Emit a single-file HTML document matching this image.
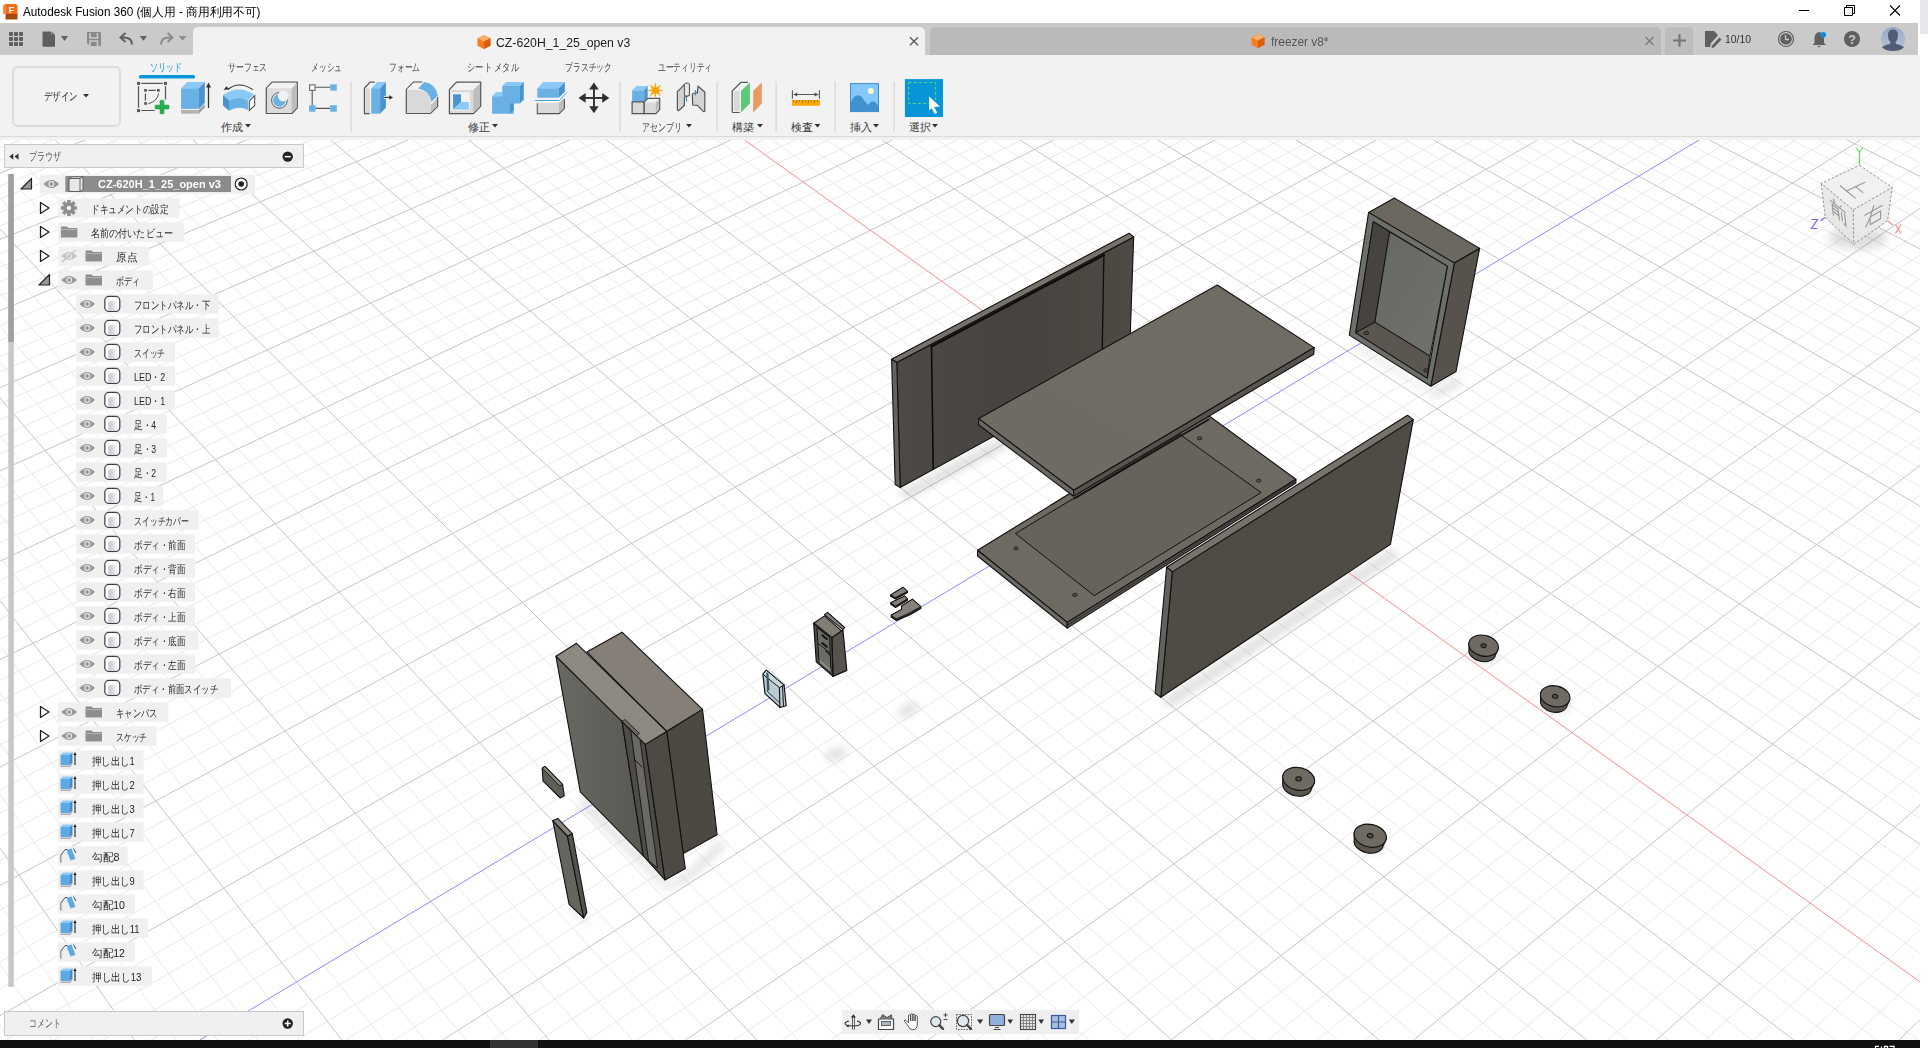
<!DOCTYPE html>
<html><head><meta charset="utf-8">
<style>
*{margin:0;padding:0;box-sizing:border-box}
html,body{width:1928px;height:1048px;overflow:hidden;background:#fff;font-family:"Liberation Sans",sans-serif;}
.abs{position:absolute}

.t{white-space:nowrap}

</style></head><body>
<div class="abs" style="left:0;top:0;width:1928px;height:1048px;">
<svg class="abs" style="left:0;top:0" width="1928" height="1048" viewBox="0 0 1928 1048">
<rect x="0" y="140" width="1920" height="900" fill="#ffffff"/>
<path d="M20.6 140.0L0.0 147.9M52.9 140.0L0.0 160.4M117.5 140.0L0.0 186.0M149.8 140.0L0.0 199.1M182.1 140.0L0.0 212.3M214.4 140.0L0.0 225.8M279.0 140.0L0.0 253.3M311.3 140.0L0.0 267.3M343.5 140.0L0.0 281.6M1902.0 140.0L1920.0 148.8M375.8 140.0L0.0 296.0M1874.4 140.0L1920.0 162.5M440.4 140.0L0.0 325.6M1819.3 140.0L1920.0 190.4M472.7 140.0L0.0 340.8M1791.8 140.0L1920.0 204.7M505.0 140.0L0.0 356.2M1764.2 140.0L1920.0 219.2M537.2 140.0L0.0 371.8M1736.7 140.0L1920.0 233.9M601.8 140.0L0.0 403.8M1681.6 140.0L1920.0 264.1M634.1 140.0L0.0 420.1M1654.0 140.0L1920.0 279.6M666.4 140.0L0.0 436.8M1626.4 140.0L1920.0 295.3M698.7 140.0L0.0 453.7M1598.9 140.0L1920.0 311.3M763.2 140.0L0.0 488.3M1543.8 140.0L1920.0 344.0M795.5 140.0L0.0 506.1M1516.2 140.0L1920.0 360.8M827.8 140.0L0.0 524.2M1488.7 140.0L1920.0 377.9M860.0 140.0L0.0 542.5M1461.1 140.0L1920.0 395.2M924.6 140.0L0.0 580.2M1406.0 140.0L1920.0 430.9M956.9 140.0L0.0 599.5M1378.4 140.0L1920.0 449.2M989.1 140.0L0.0 619.2M1350.9 140.0L1920.0 467.8M1021.4 140.0L0.0 639.2M1323.3 140.0L1920.0 486.8M1086.0 140.0L0.0 680.3M1268.2 140.0L1920.0 525.7M1118.2 140.0L0.0 701.4M1240.6 140.0L1920.0 545.7M1150.5 140.0L0.0 722.9M1213.1 140.0L1920.0 566.1M1182.8 140.0L0.0 744.8M1185.5 140.0L1920.0 586.9M1247.3 140.0L-0.0 789.9M1130.4 140.0L1920.0 629.6M1279.6 140.0L0.0 813.1M1102.8 140.0L1920.0 651.6M1311.9 140.0L0.0 836.7M1075.3 140.0L1920.0 674.1M1344.1 140.0L0.0 860.7M1047.7 140.0L1920.0 696.9M1408.7 140.0L-0.0 910.3M992.6 140.0L1920.0 744.0M1440.9 140.0L0.0 935.8M965.0 140.0L1920.0 768.3M1473.2 140.0L0.0 961.9M937.5 140.0L1920.0 793.1M1505.5 140.0L-0.0 988.5M909.9 140.0L1920.0 818.4M1570.0 140.0L5.7 1040.0M854.8 140.0L1920.0 870.6M1602.3 140.0L54.2 1040.0M827.2 140.0L1920.0 897.5M1634.5 140.0L102.8 1040.0M799.6 140.0L1920.0 925.0M1666.8 140.0L151.4 1040.0M772.1 140.0L1920.0 953.1M1731.3 140.0L248.5 1040.0M716.9 140.0L1920.0 1011.2M1763.6 140.0L297.0 1040.0M689.4 140.0L1918.3 1040.0M1795.8 140.0L345.6 1040.0M661.8 140.0L1876.8 1040.0M1828.1 140.0L394.1 1040.0M634.2 140.0L1835.3 1040.0M1892.6 140.0L491.3 1040.0M579.1 140.0L1752.4 1040.0M1920.0 143.2L539.8 1040.0M551.5 140.0L1710.9 1040.0M1920.0 164.4L588.4 1040.0M523.9 140.0L1669.4 1040.0M1920.0 186.2L636.9 1040.0M496.4 140.0L1627.9 1040.0M1920.0 231.3L734.0 1040.0M441.2 140.0L1545.0 1040.0M1920.0 254.7L782.6 1040.0M413.6 140.0L1503.5 1040.0M1920.0 278.7L831.1 1040.0M386.1 140.0L1462.0 1040.0M1920.0 303.3L879.7 1040.0M358.5 140.0L1420.6 1040.0M1920.0 354.5L976.8 1040.0M303.3 140.0L1337.6 1040.0M1920.0 381.1L1025.3 1040.0M275.8 140.0L1296.1 1040.0M1920.0 408.4L1073.9 1040.0M248.2 140.0L1254.6 1040.0M1920.0 436.5L1122.4 1040.0M220.6 140.0L1213.1 1040.0M1920.0 495.0L1219.5 1040.0M165.5 140.0L1130.2 1040.0M1920.0 525.6L1268.0 1040.0M137.9 140.0L1088.7 1040.0M1920.0 557.0L1316.6 1040.0M110.3 140.0L1047.2 1040.0M1920.0 589.3L1365.1 1040.0M82.7 140.0L1005.7 1040.0M1920.0 656.9L1462.2 1040.0M27.6 140.0L922.7 1040.0M1920.0 692.2L1510.7 1040.0M0.0 140.0L881.3 1040.0M1920.0 728.7L1559.3 1040.0M0.0 168.6L839.8 1040.0M1920.0 766.3L1607.8 1040.0M0.0 198.2L798.3 1040.0M1920.0 845.2L1704.9 1040.0M0.0 260.3L715.3 1040.0M1920.0 886.6L1753.4 1040.0M0.0 292.9L673.8 1040.0M1920.0 929.5L1801.9 1040.0M0.0 326.7L632.3 1040.0M1920.0 973.8L1850.4 1040.0M0.0 361.7L590.8 1040.0M0.0 435.5L507.8 1040.0M0.0 474.5L466.3 1040.0M0.0 515.0L424.9 1040.0M0.0 557.0L383.4 1040.0M0.0 646.2L300.4 1040.0M0.0 693.6L258.9 1040.0M0.0 743.0L217.4 1040.0M0.0 794.5L175.9 1040.0M0.0 904.5L92.9 1040.0M0.0 963.3L51.4 1040.0M0.0 1024.9L9.9 1040.0" stroke="#e9e9e9" stroke-width="1" fill="none"/>
<path d="M85.2 140.0L0.0 173.1M246.7 140.0L0.0 239.4M408.1 140.0L0.0 310.7M1846.9 140.0L1920.0 176.3M569.5 140.0L0.0 387.6M1709.1 140.0L1920.0 248.9M730.9 140.0L0.0 470.9M1571.3 140.0L1920.0 327.5M892.3 140.0L0.0 561.2M1433.6 140.0L1920.0 412.9M1053.7 140.0L-0.0 659.6M1295.8 140.0L1920.0 506.1M1215.1 140.0L0.0 767.2M1158.0 140.0L1920.0 608.1M1376.4 140.0L0.0 885.3M1020.1 140.0L1920.0 720.2M1537.7 140.0L0.0 1015.6M882.3 140.0L1920.0 844.2M1860.3 140.0L442.7 1040.0M606.6 140.0L1793.8 1040.0M1920.0 208.4L685.5 1040.0M468.8 140.0L1586.5 1040.0M1920.0 328.6L928.2 1040.0M330.9 140.0L1379.1 1040.0M1920.0 465.4L1170.9 1040.0M193.0 140.0L1171.7 1040.0M1920.0 622.6L1413.6 1040.0M55.2 140.0L964.2 1040.0M1920.0 805.1L1656.3 1040.0M0.0 228.7L756.8 1040.0M1920.0 1019.6L1899.0 1040.0M0.0 397.9L549.3 1040.0M0.0 600.7L341.9 1040.0M0.0 848.3L134.4 1040.0" stroke="#c6c6c6" stroke-width="1" fill="none"/>
<path d="M744.5 140.0L1920.0 981.8" stroke="#ff8c8c" stroke-width="1" fill="none"/>
<path d="M1699.0 140.0L199.9 1040.0" stroke="#8c8cff" stroke-width="1" fill="none"/>
<defs>
<filter id="blur6" x="-50%" y="-50%" width="200%" height="200%"><feGaussianBlur stdDeviation="6"/></filter>
<filter id="blur4" x="-50%" y="-50%" width="200%" height="200%"><feGaussianBlur stdDeviation="4"/></filter>
<filter id="blur3" x="-50%" y="-50%" width="200%" height="200%"><feGaussianBlur stdDeviation="3"/></filter>
<linearGradient id="gA" x1="0" y1="0" x2="1" y2="0"><stop offset="0" stop-color="#4d4a45"/><stop offset="0.5" stop-color="#47443f"/><stop offset="1" stop-color="#4d4a44"/></linearGradient>
<linearGradient id="gTop" x1="0" y1="1" x2="1" y2="0"><stop offset="0" stop-color="#6f6b63"/><stop offset="1" stop-color="#716c63"/></linearGradient>
<linearGradient id="gBack" x1="0" y1="0" x2="1" y2="1"><stop offset="0" stop-color="#666862"/><stop offset="1" stop-color="#70726c"/></linearGradient>
<linearGradient id="gF" x1="0" y1="0" x2="1" y2="0"><stop offset="0" stop-color="#6a6862"/><stop offset="1" stop-color="#5a5852"/></linearGradient>
</defs>
<g opacity="0.12" filter="url(#blur4)"><path d="M898.0 492.0 L1000.0 438.0 L1010.0 446.0 L906.0 500.0 Z" fill="#000"/><path d="M980.0 560.0 L1068.0 630.0 L1078.0 634.0 L990.0 566.0 Z" fill="#000"/><path d="M1162.0 700.0 L1392.0 548.0 L1400.0 556.0 L1170.0 708.0 Z" fill="#000"/><path d="M1352.0 340.0 L1432.0 392.0 L1458.0 376.0 L1462.0 384.0 L1436.0 398.0 L1356.0 348.0 Z" fill="#000"/><path d="M582.0 796.0 L645.0 860.0 L668.0 884.0 L688.0 872.0 L720.0 840.0 L726.0 846.0 L690.0 880.0 L666.0 890.0 L580.0 806.0 Z" fill="#000"/><path d="M572.0 905.0 L588.0 920.0 L590.0 926.0 L572.0 912.0 Z" fill="#000"/></g>
<g opacity="0.12" filter="url(#blur4)"><ellipse cx="908" cy="710" rx="12" ry="6" transform="rotate(-28 908 710)" fill="#000"/><ellipse cx="836" cy="754" rx="12" ry="6" transform="rotate(-20 836 754)" fill="#000"/><ellipse cx="1486" cy="656" rx="13" ry="7" fill="#000"/><ellipse cx="1558" cy="706" rx="13" ry="7" fill="#000"/><ellipse cx="1301" cy="788" rx="13" ry="7" fill="#000"/><ellipse cx="1373" cy="846" rx="13" ry="7" fill="#000"/></g>
<path d="M896.8 362.5 L1133.7 237.0 L1129.3 362.0 L900.2 487.6 Z" fill="url(#gA)" stroke="#111" stroke-width="1.1" stroke-linejoin="round"/>
<path d="M891.6 359.3 L1129.1 233.2 L1133.7 237.0 L896.8 362.5 Z" fill="#77726a" stroke="#111" stroke-width="1.1" stroke-linejoin="round"/>
<path d="M891.6 359.3 L896.8 362.5 L900.2 487.6 L895.2 484.5 Z" fill="#63645f" stroke="#111" stroke-width="1.1" stroke-linejoin="round"/>
<path d="M931.5 345.8 L933.2 469.0" fill="none" stroke="#0c0c0c" stroke-width="1.6" stroke-linecap="round"/>
<path d="M1103.9 254.2 L1102.2 352.0" fill="none" stroke="#0c0c0c" stroke-width="1.3" stroke-linecap="round"/>
<path d="M931.5 346.5 L1103.9 255.0" fill="none" stroke="#0c0c0c" stroke-width="2.2" stroke-linecap="round"/>
<path d="M977.6 550.2 L1203.0 411.5 L1295.9 479.2 L1067.2 622.4 Z" fill="#6e6a62" stroke="#111" stroke-width="1.1" stroke-linejoin="round"/>
<path d="M977.6 550.2 L1067.2 622.4 L1067.2 628.1 L977.6 556.0 Z" fill="#6a6b66" stroke="#111" stroke-width="1.1" stroke-linejoin="round"/>
<path d="M1067.2 622.4 L1295.9 479.2 L1295.9 483.0 L1067.2 628.1 Z" fill="#57534c" stroke="#111" stroke-width="1.1" stroke-linejoin="round"/>
<path d="M1015.4 533.5 L1180.0 434.4 L1261.1 492.6 L1094.2 595.6 Z" fill="#67635b" stroke="#111" stroke-width="1.0" stroke-linejoin="round"/>
<path d="M1067.2 625.2 L1295.9 481.0" fill="none" stroke="#222" stroke-width="0.8" stroke-linecap="round"/>
<ellipse cx="1016" cy="548.3" rx="2.2" ry="1.5" fill="#5a564f" stroke="#111" stroke-width="0.8"/>
<ellipse cx="1074.8" cy="594.9" rx="2.2" ry="1.5" fill="#5a564f" stroke="#111" stroke-width="0.8"/>
<ellipse cx="1199.6" cy="438.2" rx="2.2" ry="1.5" fill="#5a564f" stroke="#111" stroke-width="0.8"/>
<ellipse cx="1258.7" cy="480.6" rx="2.2" ry="1.5" fill="#5a564f" stroke="#111" stroke-width="0.8"/>
<path d="M978.7 418.6 L1217.3 285.0 L1314.2 347.6 L1073.7 490.2 Z" fill="url(#gTop)" stroke="#111" stroke-width="1.1" stroke-linejoin="round"/>
<path d="M978.7 418.6 L1073.7 490.2 L1073.5 496.3 L978.5 424.8 Z" fill="#676862" stroke="#111" stroke-width="1.1" stroke-linejoin="round"/>
<path d="M1073.7 490.2 L1314.2 347.6 L1313.8 354.2 L1073.5 496.3 Z" fill="#58544d" stroke="#111" stroke-width="1.1" stroke-linejoin="round"/>
<path d="M1074.4 498.5 L1208.6 419.5" fill="none" stroke="#111" stroke-width="1.6" stroke-linecap="round"/>
<path d="M1172.3 571.9 L1413.3 419.6 L1390.4 544.4 L1160.8 697.3 Z" fill="#4f4b45" stroke="#111" stroke-width="1.1" stroke-linejoin="round"/>
<path d="M1166.6 567.2 L1407.5 415.2 L1413.3 419.6 L1172.3 571.9 Z" fill="#77726a" stroke="#111" stroke-width="1.1" stroke-linejoin="round"/>
<path d="M1166.6 567.2 L1172.3 571.9 L1160.8 697.3 L1155.1 693.3 Z" fill="#62635e" stroke="#111" stroke-width="1.1" stroke-linejoin="round"/>
<path d="M1368.6 212.4 L1394.4 198.1 L1479.6 248.4 L1454.4 263.1 Z" fill="#6c675f" stroke="#111" stroke-width="1.1" stroke-linejoin="round"/>
<path d="M1454.4 263.1 L1479.6 248.4 L1456.0 371.6 L1430.8 386.2 Z" fill="#57534c" stroke="#111" stroke-width="1.1" stroke-linejoin="round"/>
<path d="M1368.6 212.4 L1454.4 263.1 L1430.8 386.2 L1349.3 335.1 Z M1373.4 221.7 L1355.8 332.7 L1427.2 378.1 L1447.4 266.3 Z" fill="#6d6f6a" fill-rule="evenodd" stroke="#111" stroke-width="1.1" stroke-linejoin="round"/>
<path d="M1373.4 221.7 L1389.6 232.0 L1374.9 322.2 L1355.8 332.7 Z" fill="#47443f" stroke="#111" stroke-width="1.0" stroke-linejoin="round"/>
<path d="M1389.6 232.0 L1447.4 266.3 L1430.0 356.2 L1374.9 322.2 Z" fill="url(#gBack)" stroke="#111" stroke-width="1.0" stroke-linejoin="round"/>
<path d="M1374.9 322.2 L1430.0 356.2 L1427.2 378.1 L1355.8 332.7 Z" fill="#5b5750" stroke="#111" stroke-width="1.0" stroke-linejoin="round"/>
<ellipse cx="1366.4" cy="333.1" rx="2.2" ry="1.6" fill="#4f4b45" stroke="#111" stroke-width="0.8"/>
<ellipse cx="1426" cy="370.4" rx="2.2" ry="1.6" fill="#4f4b45" stroke="#111" stroke-width="0.8"/>
<path d="M586.8 651.9 L622.0 632.2 L702.5 709.4 L666.7 731.5 Z" fill="#867f77" stroke="#111" stroke-width="1.1" stroke-linejoin="round"/>
<path d="M666.7 731.5 L702.5 709.4 L717.1 834.7 L683.3 853.6 Z" fill="#4c4842" stroke="#111" stroke-width="1.1" stroke-linejoin="round"/>
<path d="M555.9 656.2 L622.0 721.2 L643.3 855.9 L580.3 791.8 Z" fill="url(#gF)" stroke="#111" stroke-width="1.1" stroke-linejoin="round"/>
<path d="M622.0 721.2 L645.2 744.4 L665.0 879.9 L643.3 855.9 Z" fill="#4f4c47" stroke="#111" stroke-width="1.1" stroke-linejoin="round"/>
<path d="M630.5 728.5 L639.5 735.5 L657.5 868.0 L648.5 860.5 Z" fill="#6a6a65" stroke="#111" stroke-width="0.9" stroke-linejoin="round"/>
<path d="M634.0 759.0 L642.0 767.0" fill="none" stroke="#111" stroke-width="0.9" stroke-linecap="round"/>
<path d="M645.2 744.4 L666.7 731.5 L685.3 868.5 L665.0 879.9 Z" fill="#4d4943" stroke="#111" stroke-width="1.1" stroke-linejoin="round"/>
<path d="M555.9 656.2 L576.5 643.3 L666.7 731.5 L645.2 744.4 Z" fill="#8e8980" stroke="#111" stroke-width="1.1" stroke-linejoin="round"/>
<path d="M622.0 721.2 L625.0 719.5 L639.5 733.5 L636.5 735.5 Z" fill="#6a6a65" stroke="#111" stroke-width="0.8" stroke-linejoin="round"/>
<path d="M542.2 768.1 L544.9 766.5 L562.6 784.4 L564.2 795.7 L560.3 798.0 L543.1 781.1 Z" fill="#5f5d57" stroke="#111" stroke-width="1.1" stroke-linejoin="round"/>
<path d="M542.2 768.1 L544.9 766.5 L562.6 784.4 L559.6 786.0 Z" fill="#8a857c" stroke="#111" stroke-width="0.9" stroke-linejoin="round"/>
<path d="M552.8 820.7 L567.4 836.0 L583.7 918.0 L569.1 904.4 Z" fill="#66645e" stroke="#111" stroke-width="1.1" stroke-linejoin="round"/>
<path d="M567.4 836.0 L572.3 833.7 L586.9 912.5 L583.7 918.0 Z" fill="#55524c" stroke="#111" stroke-width="1.1" stroke-linejoin="round"/>
<path d="M552.8 820.7 L557.7 818.4 L572.3 833.7 L567.4 836.0 Z" fill="#8a857c" stroke="#111" stroke-width="1.1" stroke-linejoin="round"/>
<path d="M762.9 674.2 L766.3 670.2 L784.1 685.2 L786.2 705.7 L780.2 707.5 L765.0 693.6 Z" fill="#bccbd2" stroke="#0f1418" stroke-width="1.2" stroke-linejoin="round"/>
<path d="M762.9 674.2 L766.3 670.2 L784.1 685.2 L779.4 687.6 Z" fill="#c9d6dc" stroke="#0f1418" stroke-width="1.0" stroke-linejoin="round"/>
<path d="M766.3 672.0 L768.5 673.5 L769.5 690.0 L767.0 691.5 Z" fill="#2f5a66"/>
<path d="M767.5 691.5 L779.6 702.8" fill="none" stroke="#1a2a30" stroke-width="0.9" stroke-linecap="round"/>
<path d="M779.4 687.6 L779.9 707.5" fill="none" stroke="#0f1418" stroke-width="1.1" stroke-linecap="round"/>
<path d="M784.1 685.2 L782.5 686.2 L783.5 706.3" fill="none" stroke="#0f1418" stroke-width="1.0" stroke-linecap="round"/>
<path d="M824.5 614.6 L827.5 612.4 L844.6 627.5 L842.9 629.6 Z" fill="#8a857c" stroke="#111" stroke-width="1.1" stroke-linejoin="round"/>
<path d="M813.7 623.2 L824.5 615.9 L842.1 631.3 L831.8 637.8 Z" fill="#827d74" stroke="#111" stroke-width="1.1" stroke-linejoin="round"/>
<path d="M831.8 637.8 L842.9 630.0 L846.8 670.4 L833.0 676.4 Z" fill="#57534c" stroke="#111" stroke-width="1.2" stroke-linejoin="round"/>
<path d="M813.7 623.2 L831.8 637.8 L833.0 676.4 L816.3 661.8 Z" fill="#4f4c47" stroke="#111" stroke-width="1.2" stroke-linejoin="round"/>
<path d="M817.0 627.5 L829.5 637.5 L831.0 672.5 L819.0 662.0 Z" fill="#6b6b67" stroke="#111" stroke-width="0.9" stroke-linejoin="round"/>
<path d="M822.3 635.2 L826.8 639.0" fill="none" stroke="#111" stroke-width="2.0" stroke-linecap="round"/>
<path d="M822.3 643.0 L826.8 646.8" fill="none" stroke="#111" stroke-width="2.0" stroke-linecap="round"/>
<path d="M818.2 643.5 L829.8 652.5" fill="none" stroke="#111" stroke-width="0.9" stroke-linecap="round"/>
<path d="M819.5 659.5 L830.5 668.5 L830.8 672.3 L819.8 663.0 Z" fill="#8d887f"/>
<path d="M826.0 651.0 L830.0 655.0" fill="none" stroke="#222" stroke-width="1.6" stroke-linecap="round"/>
<path d="M890.7 595.0 L903.0 587.3 L907.5 591.4 L907.5 592.5 L895.5 598.9 L890.7 596.3 Z" fill="#3d3a35" stroke="#111" stroke-width="1.2" stroke-linejoin="round"/>
<path d="M890.7 595.0 L903.0 587.3 L907.5 591.4 L895.5 597.5 Z" fill="#85807a" stroke="#111" stroke-width="0.9" stroke-linejoin="round"/>
<path d="M890.7 602.8 L904.7 596.1 L907.5 598.9 L907.5 600.2 L895.5 607.5 L890.7 604.1 Z" fill="#3d3a35" stroke="#111" stroke-width="1.2" stroke-linejoin="round"/>
<path d="M890.7 602.8 L904.7 596.1 L907.5 598.9 L895.5 606.0 Z" fill="#85807a" stroke="#111" stroke-width="0.9" stroke-linejoin="round"/>
<path d="M891.2 615.2 L901.5 609.6 L901.9 605.8 L912.4 599.3 L920.8 606.6 L920.8 608.4 L910.1 614.8 L896.3 620.4 L891.2 617.0 Z" fill="#3d3a35" stroke="#111" stroke-width="1.2" stroke-linejoin="round"/>
<path d="M891.2 615.2 L901.5 609.6 L901.9 605.8 L912.4 599.3 L920.8 606.6 L909.5 613.0 L896.3 619.0 Z" fill="#85807a" stroke="#111" stroke-width="0.9" stroke-linejoin="round"/>
<g transform="translate(1483.6 645.7) rotate(12) scale(1.0)">
<path d="M-14.9 0 L-13.6 6.5 A13.6 9.5 0 0 0 13.6 6.5 L14.9 0 Z" fill="#5a564f" stroke="#111" stroke-width="1.05" stroke-linejoin="round"/>
<ellipse cx="0" cy="0" rx="15" ry="10.4" fill="#6f6a62" stroke="#111" stroke-width="1.05"/>
<ellipse cx="0" cy="0" rx="2.6" ry="1.9" fill="#55514a" stroke="#111" stroke-width="1.05"/>
</g>
<g transform="translate(1555.2 696.3) rotate(12) scale(1.0)">
<path d="M-14.9 0 L-13.6 6.5 A13.6 9.5 0 0 0 13.6 6.5 L14.9 0 Z" fill="#5a564f" stroke="#111" stroke-width="1.05" stroke-linejoin="round"/>
<ellipse cx="0" cy="0" rx="15" ry="10.4" fill="#6f6a62" stroke="#111" stroke-width="1.05"/>
<ellipse cx="0" cy="0" rx="2.6" ry="1.9" fill="#55514a" stroke="#111" stroke-width="1.05"/>
</g>
<g transform="translate(1298.6 778.9) rotate(12) scale(1.08)">
<path d="M-14.9 0 L-13.6 6.5 A13.6 9.5 0 0 0 13.6 6.5 L14.9 0 Z" fill="#5a564f" stroke="#111" stroke-width="1.05" stroke-linejoin="round"/>
<ellipse cx="0" cy="0" rx="15" ry="10.4" fill="#6f6a62" stroke="#111" stroke-width="1.05"/>
<ellipse cx="0" cy="0" rx="2.6" ry="1.9" fill="#55514a" stroke="#111" stroke-width="1.05"/>
</g>
<g transform="translate(1370.2 835.7) rotate(12) scale(1.09)">
<path d="M-14.9 0 L-13.6 6.5 A13.6 9.5 0 0 0 13.6 6.5 L14.9 0 Z" fill="#5a564f" stroke="#111" stroke-width="1.05" stroke-linejoin="round"/>
<ellipse cx="0" cy="0" rx="15" ry="10.4" fill="#6f6a62" stroke="#111" stroke-width="1.05"/>
<ellipse cx="0" cy="0" rx="2.6" ry="1.9" fill="#55514a" stroke="#111" stroke-width="1.05"/>
</g>
</svg>
<div class="abs" style="left:0;top:0;width:1920px;height:23px;background:#fff"></div>
<svg class="abs" style="left:2px;top:2px" width="18" height="18" viewBox="0 0 18 18">
<path d="M1.5 4.5 Q1.5 2 4 2 L13 2 Q15.5 2 15.5 4.5 L15.5 12 L1.5 12 Z" fill="#f56a12"/>
<path d="M1 3.5 L4 1.5 L4 12 L1 12 Z" fill="#f88b3a"/>
<path d="M3.5 12 L15.5 12 L15.5 17 Q15.5 17.5 15 17.5 L4 17.5 Q3.5 17.5 3.5 17 Z" fill="#a84712"/>
<text x="9.5" y="10.5" font-family="Liberation Sans" font-weight="bold" font-size="9" fill="#fff" text-anchor="middle">F</text>
</svg>
<div class="abs t fit" style="--w:237.4;left:23px;top:5.8px;font-size:12px;line-height:12px;color:#000;font-weight:normal;">Autodesk Fusion 360 (個人用 - 商用利用不可)</div>
<svg class="abs" style="left:1790px;top:0" width="130" height="22" viewBox="0 0 130 22">
<path d="M9 10.5 H19" stroke="#000" stroke-width="1"/>
<path d="M54.5 7.5 H62.5 V15.5 H54.5 Z M56.5 7.5 V5.5 H64.5 V13.5 H62.5" stroke="#000" stroke-width="1" fill="none"/>
<path d="M100 5.5 L110 15.5 M110 5.5 L100 15.5" stroke="#000" stroke-width="1.1"/>
</svg>
<div class="abs" style="left:1920px;top:0;width:8px;height:34px;background:#e6e8ec"></div>
<div class="abs" style="left:1920px;top:76px;width:8px;height:1px;background:#d0d0d0"></div>
<div class="abs" style="left:0;top:23px;width:1918px;height:32px;background:#cacaca"></div>
<div class="abs" style="left:193px;top:27px;width:732px;height:28px;background:#f2f2f2;border-radius:5px 5px 0 0"></div>
<div class="abs" style="left:930px;top:27px;width:731px;height:28px;background:#bababa;border-radius:5px 5px 0 0"></div>
<div class="abs" style="left:1665px;top:27px;width:28px;height:28px;background:#bdbdbd;border-radius:4px 4px 0 0"></div>
<svg class="abs" style="left:0;top:23px" width="193" height="32" viewBox="0 23 193 32">
<g fill="#5f5f5f">
<rect x="9" y="32" width="4" height="4" rx="0.8"/><rect x="14" y="32" width="4" height="4" rx="0.8"/><rect x="19" y="32" width="4" height="4" rx="0.8"/>
<rect x="9" y="37" width="4" height="4" rx="0.8"/><rect x="14" y="37" width="4" height="4" rx="0.8"/><rect x="19" y="37" width="4" height="4" rx="0.8"/>
<rect x="9" y="42" width="4" height="4" rx="0.8"/><rect x="14" y="42" width="4" height="4" rx="0.8"/><rect x="19" y="42" width="4" height="4" rx="0.8"/>
<path d="M42.5 31.5 H51 V35 H55 V46 Q55 46.8 54.2 46.8 H43.3 Q42.5 46.8 42.5 46 Z"/>
<path d="M51.5 31.5 L55 35 H51.5 Z"/>
<path d="M61 36 H68 L64.5 41 Z"/>
<path d="M139.8 36 H147 L143.4 40.8 Z"/>
</g>
<path d="M87.5 32 H100 Q101 32 101 33 V45 Q101 46 100 46 H90 L87 43 V33 Q87 32 88 32 Z" fill="#8a8a8a"/>
<path d="M90 33 V38 H97.5 V33 M90 46 V41 H97.5 V46" stroke="#cacaca" stroke-width="1.6" fill="none"/>
<path d="M132 44.5 Q132 37.5 124 37.5 H121.5" stroke="#5f5f5f" stroke-width="2" fill="none"/>
<path d="M125.5 33 L120.5 37.5 L125.5 42" stroke="#5f5f5f" stroke-width="2" fill="none"/>
<path d="M161 44.5 Q161 37.5 169 37.5 H171.5" stroke="#8c8c8c" stroke-width="2" fill="none"/>
<path d="M167.5 33 L172.5 37.5 L167.5 42" stroke="#8c8c8c" stroke-width="2" fill="none"/>
<path d="M178.8 36 H186.3 L182.5 40.8 Z" fill="#8c8c8c"/>
</svg>
<svg class="abs" style="left:476px;top:34px" width="16" height="16" viewBox="0 0 16 16">
<path d="M8 1 L14.5 4.2 L14.5 11.8 L8 15 L1.5 11.8 L1.5 4.2 Z" fill="#f57d1f"/>
<path d="M8 1 L14.5 4.2 L8 7.5 L1.5 4.2 Z" fill="#fcae6a"/>
<path d="M8 7.5 L14.5 4.2 L14.5 11.8 L8 15 Z" fill="#d9600e"/>
</svg>
<div class="abs t fit" style="--w:134.3;left:496px;top:35.5px;font-size:13px;line-height:13px;color:#1e1e1e;font-weight:normal;">CZ-620H_1_25_open v3</div>
<svg class="abs" style="left:908px;top:35px" width="12" height="12" viewBox="0 0 12 12"><path d="M2 2.3 L10 10.3 M10 2.3 L2 10.3" stroke="#555" stroke-width="1.3"/></svg>
<svg class="abs" style="left:1250px;top:33px" width="16" height="16" viewBox="0 0 16 16">
<path d="M8 1 L14.5 4.2 L14.5 11.8 L8 15 L1.5 11.8 L1.5 4.2 Z" fill="#f57d1f"/>
<path d="M8 1 L14.5 4.2 L8 7.5 L1.5 4.2 Z" fill="#fcae6a"/>
<path d="M8 7.5 L14.5 4.2 L14.5 11.8 L8 15 Z" fill="#d9600e"/>
</svg>
<div class="abs t fit" style="--w:57.5;left:1270.5px;top:35.8px;font-size:12px;line-height:12px;color:#555;font-weight:normal;">freezer v8*</div>
<svg class="abs" style="left:1644px;top:35px" width="12" height="12" viewBox="0 0 12 12"><path d="M1.5 2 L9.5 10 M9.5 2 L1.5 10" stroke="#777" stroke-width="1.2"/></svg>
<svg class="abs" style="left:1665px;top:27px" width="255" height="28" viewBox="1665 27 255 28">
<path d="M1679.5 34.3 V46.7 M1673 40.5 H1686" stroke="#777" stroke-width="2.2"/>
<path d="M1705 31 H1714 L1717.5 34.5 V36 L1711 43 L1710 47 H1705 Z" fill="#5f5f5f"/>
<path d="M1712 45.5 L1719.5 37.5 L1721.5 39.5 L1714 47.5 L1711.5 48 Z" fill="#5f5f5f"/>
<circle cx="1786" cy="39" r="7.5" fill="none" stroke="#5f5f5f" stroke-width="1.2"/>
<circle cx="1786" cy="39" r="5.8" fill="#5f5f5f"/>
<path d="M1785.5 35 V39.5 H1789" stroke="#cacaca" stroke-width="1.3" fill="none"/>
<path d="M1819 32 Q1814.5 33 1814.5 38.5 V43 L1812.5 45 H1826 L1824 43 V38.5 Q1824 33 1819 32 Z" fill="#5f5f5f"/>
<path d="M1817 46 H1821 L1819 47.5 Z" fill="#5f5f5f"/>
<circle cx="1823.3" cy="34.8" r="2.8" fill="#0e8ee0"/>
<circle cx="1852" cy="39" r="8" fill="#5f5f5f"/>
<text x="1852" y="43.5" font-family="Liberation Sans" font-weight="bold" font-size="12.5" fill="#cacaca" text-anchor="middle">?</text>
<defs><linearGradient id="av" x1="0" y1="0" x2="0" y2="1"><stop offset="0" stop-color="#95a8c4"/><stop offset="1" stop-color="#b9c6d8"/></linearGradient></defs>
<circle cx="1893" cy="39" r="12" fill="url(#av)"/>
<path d="M1893 29.5 Q1898 29.5 1898 35 Q1898 40 1895.5 42 L1896 44 Q1902 45 1904 47.5 Q1900 51 1893 51 Q1886 51 1882 47.5 Q1884 45 1890 44 L1890.5 42 Q1888 40 1888 35 Q1888 29.5 1893 29.5 Z" fill="#4f5e75"/>
</svg>
<div class="abs t fit" style="--w:26;left:1725px;top:34.2px;font-size:11px;line-height:11px;color:#333;font-weight:normal;">10/10</div>
<div class="abs" style="left:0;top:55px;width:1920px;height:82px;background:#f2f2f2;border-bottom:1px solid #dadada"></div>
<div class="abs" style="left:0;top:137px;width:1920px;height:3px;background:#f2f2f2"></div>
<div class="abs" style="left:0;top:1040px;width:1920px;height:8px;background:#111"></div>
<div class="abs" style="left:12px;top:65.5px;width:109px;height:61px;border:2px solid #dcdcdc;border-radius:6px"></div>
<div class="abs t fit" style="--w:33.7;left:44px;top:91.2px;font-size:11px;line-height:11px;color:#222;font-weight:normal;">デザイン</div>
<div class="abs t fit" style="--w:32.3;left:150px;top:62.2px;font-size:11px;line-height:11px;color:#0696d7;font-weight:normal;">ソリッド</div>
<div class="abs t fit" style="--w:39.3;left:228px;top:62.2px;font-size:11px;line-height:11px;color:#444;font-weight:normal;">サーフェス</div>
<div class="abs t fit" style="--w:31;left:311px;top:62.2px;font-size:11px;line-height:11px;color:#444;font-weight:normal;">メッシュ</div>
<div class="abs t fit" style="--w:31;left:389px;top:62.2px;font-size:11px;line-height:11px;color:#444;font-weight:normal;">フォーム</div>
<div class="abs t fit" style="--w:52;left:467px;top:62.2px;font-size:11px;line-height:11px;color:#444;font-weight:normal;">シート メタル</div>
<div class="abs t fit" style="--w:47;left:565px;top:62.2px;font-size:11px;line-height:11px;color:#444;font-weight:normal;">プラスチック</div>
<div class="abs t fit" style="--w:54;left:658px;top:62.2px;font-size:11px;line-height:11px;color:#444;font-weight:normal;">ユーティリティ</div>
<div class="abs t fit" style="--w:22;left:221px;top:121.7px;font-size:11px;line-height:11px;color:#3a3a3a;font-weight:normal;">作成</div>
<div class="abs t fit" style="--w:22;left:468px;top:121.7px;font-size:11px;line-height:11px;color:#3a3a3a;font-weight:normal;">修正</div>
<div class="abs t fit" style="--w:40;left:642px;top:121.7px;font-size:11px;line-height:11px;color:#3a3a3a;font-weight:normal;">アセンブリ</div>
<div class="abs t fit" style="--w:22;left:732px;top:121.7px;font-size:11px;line-height:11px;color:#3a3a3a;font-weight:normal;">構築</div>
<div class="abs t fit" style="--w:22;left:790.5px;top:121.7px;font-size:11px;line-height:11px;color:#3a3a3a;font-weight:normal;">検査</div>
<div class="abs t fit" style="--w:22;left:850px;top:121.7px;font-size:11px;line-height:11px;color:#3a3a3a;font-weight:normal;">挿入</div>
<div class="abs t fit" style="--w:22;left:909px;top:121.7px;font-size:11px;line-height:11px;color:#3a3a3a;font-weight:normal;">選択</div>
<svg class="abs" style="left:0;top:55px" width="960" height="85" viewBox="0 55 960 85">
<rect x="139" y="75" width="56" height="3.5" rx="1.5" fill="#0696d7"/>
<path d="M83 94 H89 L86 97.5 Z" fill="#333"/>
<g fill="#333">
<path d="M245 124 H251 L248 127.5 Z"/><path d="M492 124 H498 L495 127.5 Z"/><path d="M686 124 H692 L689 127.5 Z"/>
<path d="M757 124 H763 L760 127.5 Z"/><path d="M814.5 124 H820.5 L817.5 127.5 Z"/><path d="M873 124 H879 L876 127.5 Z"/><path d="M932 124 H938 L935 127.5 Z"/>
</g>
<g fill="#d6d6d6"><rect x="350.5" y="81.5" width="1.2" height="50.5"/><rect x="619.5" y="81.5" width="1.2" height="50.5"/><rect x="716.5" y="81.5" width="1.2" height="50.5"/><rect x="775.5" y="81.5" width="1.2" height="50.5"/><rect x="834.5" y="81.5" width="1.2" height="50.5"/><rect x="893.5" y="81.5" width="1.2" height="50.5"/></g>
<!-- sketch -->
<g fill="#555">
<rect x="137.1" y="81.9" width="3" height="3"/><rect x="164" y="81.9" width="3" height="3"/><rect x="137.1" y="109.1" width="3" height="3"/>
<rect x="144.2" y="89" width="2.7" height="2.7"/><rect x="157" y="89" width="2.7" height="2.7"/><rect x="144.2" y="102.1" width="2.7" height="2.7"/>
</g>
<g stroke="#555" stroke-width="1.2" fill="none">
<path d="M141.3 83.4 H162.8 M138.5 86.1 V107.7 M165.5 86.1 V99.6 M141.3 110.5 H154.7"/>
<path d="M148.3 90.4 H155.8 M145.4 93.4 V100.6"/>
<path d="M158.7 93.4 Q157 101.5 148.3 103.7" stroke-width="1"/>
</g>
<path d="M160.1 100.4 H163.9 V105.2 H168.9 V108.9 H163.9 V113.7 H160.1 V108.9 H155.2 V105.2 H160.1 Z" fill="#23b04e" stroke="#17933c" stroke-width="0.6"/>
<!-- extrude -->
<path d="M181.1 88.2 H198.9 V108.9 H181.1 Z" fill="#69b0e4"/>
<path d="M181.1 88.2 L187.3 82 H204.8 L198.9 88.2 Z" fill="#8bcaf8"/>
<path d="M198.9 88.2 L204.8 82 V102.7 L198.9 108.9 Z" fill="#4a93cf"/>
<path d="M181.1 110 H198.9 V113.7 H181.1 Z" fill="#b3b3b3"/>
<path d="M198.9 110 L204.8 103.8 V107.5 L198.9 113.7 Z" fill="#a2a2a2"/>
<path d="M208.5 108 V87" stroke="#333" stroke-width="1.3"/>
<path d="M206 87.5 L208.5 82.5 L211 87.5 Z" fill="#333"/>
<!-- revolve -->
<path d="M227.9 89.5 Q238.7 80.5 252.9 89.6" stroke="#333" stroke-width="1.1" fill="none"/>
<path d="M223.6 90 L226.5 86.2 L229 89.3 Z" fill="#333"/>
<path d="M223 95 Q238.7 84 254.1 94.6 L247.9 100.4 Q238.7 95 229 100.6 Z" fill="#8bcaf8"/>
<path d="M229 100.6 Q238.7 95 247.9 100.4 V110 Q238.7 105 229 110.8 Z" fill="#69b0e4"/>
<path d="M223 95 L229 100.6 V110.8 L223 105.6 Z" fill="#4a93cf"/>
<path d="M249.3 101.2 L254.7 95.6 V105.4 L249.3 110.4 Z" fill="#fff" stroke="#555" stroke-width="1.1"/>
<!-- hole -->
<path d="M266.3 88.2 L272.1 82.1 H297.3 V107.7 L292.1 113.5 H266.3 Z" fill="#dcdcdc" stroke="#555" stroke-width="1.2"/>
<path d="M267 88.2 L272.6 82.7 H296.6 L291.6 88.2 Z" fill="#f2f2f2"/>
<path d="M291.6 88.8 L296.6 83.5 V107.5 L291.6 112.8 Z" fill="#bdbdbd"/>
<circle cx="279.4" cy="100.4" r="7.8" fill="#f2f2f2" stroke="#555" stroke-width="1"/>
<circle cx="279.4" cy="100.4" r="6.3" fill="#69b0e4"/>
<circle cx="283.3" cy="96" r="5.4" fill="#f2f2f2"/>
<!-- pattern -->
<path d="M315.4 87.3 H330.2 M312.2 90.4 V105.2 M315.4 108.4 H330.2" stroke="#555" stroke-width="1.1"/>
<rect x="309.6" y="84.9" width="5.4" height="5.4" fill="#fff" stroke="#555" stroke-width="1"/>
<rect x="330.2" y="84.4" width="6.6" height="6.2" fill="#69b0e4"/>
<rect x="309.1" y="105.2" width="6.4" height="6.5" fill="#69b0e4"/>
<rect x="330.2" y="105.2" width="6.6" height="6.5" fill="#69b0e4"/>
<!-- press pull -->
<path d="M369.8 113.6 H364.4 V88.3 L370.2 82.1 H374.7" stroke="#555" stroke-width="1.2" fill="none"/>
<path d="M365.4 88.6 H369.8 V113 H365.4 Z" fill="#d9d9d9"/>
<path d="M371.2 88.2 H380.1 V113.7 H371.2 Z" fill="#69b0e4"/>
<path d="M371.2 88.2 L377.2 82.1 H385.9 L380.1 88.2 Z" fill="#8bcaf8"/>
<path d="M380.1 88.2 L385.9 82.1 V107.5 L380.1 113.7 Z" fill="#4a93cf"/>
<path d="M384 97.4 H390" stroke="#fff" stroke-width="3"/>
<path d="M384.1 97.4 H390.7" stroke="#333" stroke-width="1.2"/>
<path d="M389.3 95 L393 97.4 L389.3 99.8 Z" fill="#333"/>
<!-- fillet -->
<path d="M406.3 113.6 V89.4 L413.5 82.1 H422.2 M430.3 113.5 H406.3 M430.3 113.5 L437.6 106.4 V97.1" stroke="#555" stroke-width="1.2" fill="none"/>
<path d="M407 90 H418 Q430.6 91 430.6 102 V113 H407 Z" fill="#d9d9d9"/>
<path d="M407 89.5 L413.8 82.8 H424.3 L418.1 88.6 Z" fill="#f2f2f2"/>
<path d="M424.3 82.1 Q436 84 437.8 95.6 L431.4 101.9 Q429.5 90.5 418.1 88.6 Z" fill="#69b0e4"/>
<path d="M430.8 105 L437 98.6 V106.2 L430.8 112.5 Z" fill="#c0c0c0"/>
<!-- shell -->
<path d="M449.4 113.7 V89.6 L456.6 82.1 H480.7 V106.2 L473.4 113.7 Z" fill="#f2f2f2" stroke="#555" stroke-width="1.2"/>
<path d="M450.4 90 H473.2 V112.9 H450.4 Z" fill="#d9d9d9"/>
<path d="M451.2 92.5 H469.9 V110.8 H451.2 Z" fill="#f2f2f2"/>
<path d="M453.1 94.2 H461 V102.1 L453.1 109.5 Z" fill="#4a93cf"/>
<path d="M453.1 109.5 L461 102.1 H468.9 V109.7 Z" fill="#8bcaf8"/>
<path d="M473.2 90 L480 83.4 V106 L473.2 112.9 Z" fill="#bdbdbd"/>
<!-- combine -->
<path d="M502.3 86.1 L506 82.1 H523.8 L519.9 86.1 Z" fill="#8bcaf8"/>
<path d="M492.1 96.3 L496.2 92.1 H502.3 V96.3 Z" fill="#8bcaf8"/>
<path d="M502.3 86.1 H519.9 V103.5 H513.7 V113.7 H492.1 V96.3 H502.3 Z" fill="#69b0e4"/>
<path d="M519.9 86.1 L523.8 82.1 V99.6 L519.9 103.5 Z" fill="#4a93cf"/>
<path d="M509.9 103.5 H513.7 V110 L509.9 113.7 Z" fill="#4a93cf"/>
<!-- split -->
<path d="M537.3 88.2 H558.8 V97.7 H537.3 Z" fill="#69b0e4"/>
<path d="M537.3 88.2 L543.3 82.1 H564.9 L558.8 88.2 Z" fill="#8bcaf8"/>
<path d="M558.8 88.2 L564.9 82.1 V91.7 L558.8 97.7 Z" fill="#4a93cf"/>
<path d="M535 100.4 H559.5 L566.7 92.5" stroke="#fff" stroke-width="2.6" fill="none"/>
<path d="M535 100.4 H559.5 L566.7 92.5" stroke="#1e8fe0" stroke-width="0.9" fill="none"/>
<path d="M538 103 H558.8 V113.6 H538 Z" fill="#d9d9d9"/>
<path d="M558.8 103 L564.2 98.3 V107.9 L558.8 113.6 Z" fill="#bdbdbd"/>
<path d="M537.3 103.3 V113.6 H559.2 L564.4 108.6 V99" stroke="#555" stroke-width="1.1" fill="none"/>
<!-- move -->
<g fill="#2e2e2e">
<path d="M593.9 82.6 L598.7 89.6 H589.1 Z"/><path d="M593.9 113.3 L598.7 106.2 H589.1 Z"/>
<path d="M578.5 97.9 L585.6 93.1 V102.7 Z"/><path d="M609.3 97.9 L602.2 93.1 V102.7 Z"/>
<rect x="593" y="89" width="1.9" height="18"/><rect x="585" y="97" width="18" height="1.9"/>
</g>
<!-- assembly -->
<path d="M632.1 90.3 H644.2 V101.9 H632.1 Z" fill="#69b0e4"/>
<path d="M632.1 90.3 L636.3 86.1 H647.7 L644.2 90.3 Z" fill="#8bcaf8"/>
<path d="M644.2 90.3 L647.7 86.1 V97.9 L644.2 101.9 Z" fill="#4a93cf"/>
<path d="M632.1 101.9 H644.2 V113.7 H632.1 Z" fill="#d9d9d9" stroke="#555" stroke-width="1.2"/>
<path d="M644.2 102.1 L648.1 98.3 H659.7 V109.5 L656 113.7 H644.2 Z" fill="#d9d9d9" stroke="#555" stroke-width="1.2"/>
<path d="M644.8 102.4 L648.3 98.9 H659 L655.5 102.4 Z" fill="#f2f2f2"/>
<path d="M655.8 102.6 L659.1 99.4 V109.3 L655.8 112.9 Z" fill="#bdbdbd"/>
<path d="M655.4 82.1 L656.6 87.8 L661.1 84.3 L658.5 89.5 L664.1 90.4 L658.5 91.5 L661.1 96.4 L656.6 93.1 L655.4 98.6 L654.2 93.1 L649.7 96.4 L652.3 91.5 L646.7 90.4 L652.3 89.5 L649.7 84.3 L654.2 87.8 Z" fill="#f5a300"/>
<!-- joint -->
<path d="M677.4 91.7 L684.4 84.6 H689.4 V95.4 L684.4 97.1 V105.4 L678.6 110.8 L677.4 110 Z" fill="#d3d3d3" stroke="#555" stroke-width="1.2"/>
<path d="M684.4 84.6 Q684.4 83 687 83 Q689.4 83 689.4 84.6 V95.4 Q687 97 684.4 95.4 Z" fill="#e6e6e6" stroke="#555" stroke-width="1"/>
<path d="M692.3 94.2 Q694 92.5 697.3 92.9 L698.1 86.3 L704.8 92.1 V111.2 L703.5 111.6 L697.3 105.4 L692.7 105 Z" fill="#d3d3d3" stroke="#555" stroke-width="1.2"/>
<path d="M686.5 97.3 V101.7 M695.4 90 V95.4" stroke="#1e8fe0" stroke-width="1"/>
<!-- construct -->
<path d="M732.2 112.5 V91 L741 82.4 H747.8 M732.2 112.5 H739.7" stroke="#555" stroke-width="1.2" fill="none"/>
<path d="M733.8 91.2 H739.7 V111.2 H733.8 Z" fill="#d9d9d9"/>
<path d="M741 91 L749.9 82.4 V103.4 L741 112.5 Z" fill="#5cc87a"/>
<path d="M753.2 90.7 L761.8 82.4 V103.4 L753.2 112.5 Z" fill="#e89a63"/>
<!-- measure -->
<path d="M792.4 90.2 V98.7 M819.4 90.2 V98.7 M794 94.5 H817.8" stroke="#555" stroke-width="1.1"/>
<path d="M793.2 94.5 L797.2 92.5 V96.5 Z M818.6 94.5 L814.6 92.5 V96.5 Z" fill="#555"/>
<rect x="792.1" y="100" width="27.8" height="5.7" fill="#f7a800"/>
<path d="M793.5 100 V102 M796.5 100 V103 M799.5 100 V102 M802.5 100 V103 M805.5 100 V102 M808.5 100 V103 M811.5 100 V102 M814.5 100 V103 M817.5 100 V102" stroke="#a86d00" stroke-width="0.8"/>
<!-- insert -->
<rect x="850.5" y="83.6" width="28" height="28" fill="#85c8fa" stroke="#3d8fd0" stroke-width="1"/>
<path d="M851 101.9 Q853.5 95 858.5 95.2 Q861.5 95.5 864.5 101 L868.2 105 Q870.3 101 873.5 101.5 Q876 102 878 105.8 V111.4 H851 Z" fill="#4291cf"/>
<circle cx="870.9" cy="91" r="3" fill="#fdfdc8"/>
<!-- select -->
<rect x="904.9" y="79.1" width="38.1" height="37.9" fill="#0696d7"/>
<rect x="908.6" y="82.6" width="27" height="20.8" fill="none" stroke="#6ee06a" stroke-width="0.9" stroke-dasharray="3 2.2"/>
<path d="M929 96.3 L939.9 106.6 L934.2 107.1 L937.3 112.8 L934.7 113.9 L931.6 108.2 L929 110.5 Z" fill="#fff"/>
</svg><div class="abs" style="left:4px;top:144px;width:300px;height:24px;background:#f0f0f0;border:1px solid #c9c9c9"></div>
<div class="abs t fit" style="--w:32.6;left:28.8px;top:151.2px;font-size:11px;line-height:11px;color:#555;font-weight:normal;">ブラウザ</div>
<svg class="abs" style="left:0;top:140px" width="320" height="860" viewBox="0 140 320 860">
<path d="M13.3 153.5 L9.3 156.6 L13.3 159.7 Z M18.5 153.5 L14.5 156.6 L18.5 159.7 Z" fill="#333"/>
<circle cx="287.7" cy="156.6" r="5.2" fill="#222"/><rect x="284.7" y="155.9" width="6" height="1.5" fill="#fff"/>
<rect x="8.3" y="174" width="5.5" height="813" fill="#c8c8c8"/>
<rect x="8.3" y="174" width="5.5" height="168" rx="1" fill="#9f9f9f"/>
</svg>
<svg class="abs" style="left:0;top:170px" width="320" height="830" viewBox="0 170 320 830"><defs><linearGradient id="bg" x1="0" y1="0" x2="1" y2="0"><stop offset="0" stop-color="#c2c6ce"/><stop offset="1" stop-color="#f4f4f6"/></linearGradient></defs><rect x="40" y="174.7" width="215" height="19" fill="#f0f0f0"/><path d="M31.5 178.5 V189 H21.0 Z" fill="#9a9a9a" stroke="#222" stroke-width="1.2" stroke-linejoin="round"/><path d="M43.5 184 Q51.3 176.2 59.099999999999994 184 Q51.3 191.8 43.5 184 Z" fill="#9a9a9a"/><circle cx="51.3" cy="184" r="2.9" fill="#f0f0f0"/><circle cx="51.3" cy="184" r="1.9" fill="#9a9a9a"/><rect x="65.4" y="176" width="165.6" height="16" fill="#8c8c8c"/><path d="M69 178.5 L72 176.8 H83 V190 L80 191.5 H69 Z" fill="#e8e8e8" stroke="#555" stroke-width="0.9"/><path d="M69 178.5 H80 L83 176.8 M80 178.5 V191.5" stroke="#555" stroke-width="0.9" fill="none"/><circle cx="241.2" cy="184" r="6" fill="#fff" stroke="#222" stroke-width="1.2"/><circle cx="241.2" cy="184" r="2.8" fill="#222"/><rect x="58.2" y="198.5" width="121.3" height="19.2" fill="#f0f0f0"/><path d="M40.5 202.5 L49.0 208 L40.5 213.5 Z" fill="#fff" stroke="#222" stroke-width="1.3" stroke-linejoin="round"/><rect x="67.10000000000001" y="200" width="3.6" height="16" fill="#8e8e8e" transform="rotate(0 68.9 208)"/><rect x="67.10000000000001" y="200" width="3.6" height="16" fill="#8e8e8e" transform="rotate(45 68.9 208)"/><rect x="67.10000000000001" y="200" width="3.6" height="16" fill="#8e8e8e" transform="rotate(90 68.9 208)"/><rect x="67.10000000000001" y="200" width="3.6" height="16" fill="#8e8e8e" transform="rotate(135 68.9 208)"/><circle cx="68.9" cy="208" r="5.8" fill="#8e8e8e"/><circle cx="68.9" cy="208" r="2.3" fill="#f0f0f0"/><rect x="58.2" y="222.5" width="125.6" height="19.2" fill="#f0f0f0"/><path d="M40.5 226.5 L49.0 232 L40.5 237.5 Z" fill="#fff" stroke="#222" stroke-width="1.3" stroke-linejoin="round"/><path d="M60.9 226.5 H66.9 L68.4 228 H77.4 V237.5 H60.9 Z" fill="#8e8e8e"/><rect x="60.9" y="229" width="16.5" height="1" fill="#b5b5b5"/><rect x="58.2" y="246.5" width="90.6" height="19.2" fill="#f0f0f0"/><path d="M40.5 250.5 L49.0 256 L40.5 261.5 Z" fill="#fff" stroke="#222" stroke-width="1.3" stroke-linejoin="round"/><path d="M61.400000000000006 256 Q69.2 248.2 77.0 256 Q69.2 263.8 61.400000000000006 256 Z" fill="#c4c4c4"/><circle cx="69.2" cy="256" r="2.9" fill="#f0f0f0"/><circle cx="69.2" cy="256" r="1.9" fill="#c4c4c4"/><path d="M62 262 L76 250" stroke="#c4c4c4" stroke-width="1.4"/><path d="M85.5 250.5 H91.5 L93.0 252 H102.0 V261.5 H85.5 Z" fill="#8e8e8e"/><rect x="85.5" y="253" width="16.5" height="1" fill="#b5b5b5"/><rect x="58.2" y="270.5" width="94.6" height="19.2" fill="#f0f0f0"/><path d="M49.5 274.5 V285 H39.0 Z" fill="#9a9a9a" stroke="#222" stroke-width="1.2" stroke-linejoin="round"/><path d="M61.400000000000006 280 Q69.2 272.2 77.0 280 Q69.2 287.8 61.400000000000006 280 Z" fill="#9a9a9a"/><circle cx="69.2" cy="280" r="2.9" fill="#f0f0f0"/><circle cx="69.2" cy="280" r="1.9" fill="#9a9a9a"/><path d="M85.5 274.5 H91.5 L93.0 276 H102.0 V285.5 H85.5 Z" fill="#8e8e8e"/><rect x="85.5" y="277" width="16.5" height="1" fill="#b5b5b5"/><rect x="76.1" y="294.4" width="142.4" height="19.3" fill="#f0f0f0"/><path d="M79.4 304 Q87.2 296.2 95.0 304 Q87.2 311.8 79.4 304 Z" fill="#9a9a9a"/><circle cx="87.2" cy="304" r="2.9" fill="#f0f0f0"/><circle cx="87.2" cy="304" r="1.9" fill="#9a9a9a"/><rect x="104.8" y="296.4" width="15" height="15" rx="4" fill="#fdfdfd" stroke="#3a404a" stroke-width="1.2"/><path d="M108.5 301.6 Q112.5 300.6 117.0 301.6 V310.4 H108.5 Z" fill="url(#bg)"/><rect x="76.1" y="318.4" width="142.4" height="19.3" fill="#f0f0f0"/><path d="M79.4 328 Q87.2 320.2 95.0 328 Q87.2 335.8 79.4 328 Z" fill="#9a9a9a"/><circle cx="87.2" cy="328" r="2.9" fill="#f0f0f0"/><circle cx="87.2" cy="328" r="1.9" fill="#9a9a9a"/><rect x="104.8" y="320.4" width="15" height="15" rx="4" fill="#fdfdfd" stroke="#3a404a" stroke-width="1.2"/><path d="M108.5 325.6 Q112.5 324.6 117.0 325.6 V334.4 H108.5 Z" fill="url(#bg)"/><rect x="76.1" y="342.4" width="98.9" height="19.3" fill="#f0f0f0"/><path d="M79.4 352 Q87.2 344.2 95.0 352 Q87.2 359.8 79.4 352 Z" fill="#9a9a9a"/><circle cx="87.2" cy="352" r="2.9" fill="#f0f0f0"/><circle cx="87.2" cy="352" r="1.9" fill="#9a9a9a"/><rect x="104.8" y="344.4" width="15" height="15" rx="4" fill="#fdfdfd" stroke="#3a404a" stroke-width="1.2"/><path d="M108.5 349.6 Q112.5 348.6 117.0 349.6 V358.4 H108.5 Z" fill="url(#bg)"/><rect x="76.1" y="366.4" width="98.9" height="19.3" fill="#f0f0f0"/><path d="M79.4 376 Q87.2 368.2 95.0 376 Q87.2 383.8 79.4 376 Z" fill="#9a9a9a"/><circle cx="87.2" cy="376" r="2.9" fill="#f0f0f0"/><circle cx="87.2" cy="376" r="1.9" fill="#9a9a9a"/><rect x="104.8" y="368.4" width="15" height="15" rx="4" fill="#fdfdfd" stroke="#3a404a" stroke-width="1.2"/><path d="M108.5 373.6 Q112.5 372.6 117.0 373.6 V382.4 H108.5 Z" fill="url(#bg)"/><rect x="76.1" y="390.4" width="98.9" height="19.3" fill="#f0f0f0"/><path d="M79.4 400 Q87.2 392.2 95.0 400 Q87.2 407.8 79.4 400 Z" fill="#9a9a9a"/><circle cx="87.2" cy="400" r="2.9" fill="#f0f0f0"/><circle cx="87.2" cy="400" r="1.9" fill="#9a9a9a"/><rect x="104.8" y="392.4" width="15" height="15" rx="4" fill="#fdfdfd" stroke="#3a404a" stroke-width="1.2"/><path d="M108.5 397.6 Q112.5 396.6 117.0 397.6 V406.4 H108.5 Z" fill="url(#bg)"/><rect x="76.1" y="414.4" width="90.7" height="19.3" fill="#f0f0f0"/><path d="M79.4 424 Q87.2 416.2 95.0 424 Q87.2 431.8 79.4 424 Z" fill="#9a9a9a"/><circle cx="87.2" cy="424" r="2.9" fill="#f0f0f0"/><circle cx="87.2" cy="424" r="1.9" fill="#9a9a9a"/><rect x="104.8" y="416.4" width="15" height="15" rx="4" fill="#fdfdfd" stroke="#3a404a" stroke-width="1.2"/><path d="M108.5 421.6 Q112.5 420.6 117.0 421.6 V430.4 H108.5 Z" fill="url(#bg)"/><rect x="76.1" y="438.4" width="90.7" height="19.3" fill="#f0f0f0"/><path d="M79.4 448 Q87.2 440.2 95.0 448 Q87.2 455.8 79.4 448 Z" fill="#9a9a9a"/><circle cx="87.2" cy="448" r="2.9" fill="#f0f0f0"/><circle cx="87.2" cy="448" r="1.9" fill="#9a9a9a"/><rect x="104.8" y="440.4" width="15" height="15" rx="4" fill="#fdfdfd" stroke="#3a404a" stroke-width="1.2"/><path d="M108.5 445.6 Q112.5 444.6 117.0 445.6 V454.4 H108.5 Z" fill="url(#bg)"/><rect x="76.1" y="462.4" width="90.7" height="19.3" fill="#f0f0f0"/><path d="M79.4 472 Q87.2 464.2 95.0 472 Q87.2 479.8 79.4 472 Z" fill="#9a9a9a"/><circle cx="87.2" cy="472" r="2.9" fill="#f0f0f0"/><circle cx="87.2" cy="472" r="1.9" fill="#9a9a9a"/><rect x="104.8" y="464.4" width="15" height="15" rx="4" fill="#fdfdfd" stroke="#3a404a" stroke-width="1.2"/><path d="M108.5 469.6 Q112.5 468.6 117.0 469.6 V478.4 H108.5 Z" fill="url(#bg)"/><rect x="76.1" y="486.4" width="87.1" height="19.3" fill="#f0f0f0"/><path d="M79.4 496 Q87.2 488.2 95.0 496 Q87.2 503.8 79.4 496 Z" fill="#9a9a9a"/><circle cx="87.2" cy="496" r="2.9" fill="#f0f0f0"/><circle cx="87.2" cy="496" r="1.9" fill="#9a9a9a"/><rect x="104.8" y="488.4" width="15" height="15" rx="4" fill="#fdfdfd" stroke="#3a404a" stroke-width="1.2"/><path d="M108.5 493.6 Q112.5 492.6 117.0 493.6 V502.4 H108.5 Z" fill="url(#bg)"/><rect x="76.1" y="510.4" width="122.5" height="19.3" fill="#f0f0f0"/><path d="M79.4 520 Q87.2 512.2 95.0 520 Q87.2 527.8 79.4 520 Z" fill="#9a9a9a"/><circle cx="87.2" cy="520" r="2.9" fill="#f0f0f0"/><circle cx="87.2" cy="520" r="1.9" fill="#9a9a9a"/><rect x="104.8" y="512.4" width="15" height="15" rx="4" fill="#fdfdfd" stroke="#3a404a" stroke-width="1.2"/><path d="M108.5 517.6 Q112.5 516.6 117.0 517.6 V526.4 H108.5 Z" fill="url(#bg)"/><rect x="76.1" y="534.4" width="118.9" height="19.3" fill="#f0f0f0"/><path d="M79.4 544 Q87.2 536.2 95.0 544 Q87.2 551.8 79.4 544 Z" fill="#9a9a9a"/><circle cx="87.2" cy="544" r="2.9" fill="#f0f0f0"/><circle cx="87.2" cy="544" r="1.9" fill="#9a9a9a"/><rect x="104.8" y="536.4" width="15" height="15" rx="4" fill="#fdfdfd" stroke="#3a404a" stroke-width="1.2"/><path d="M108.5 541.6 Q112.5 540.6 117.0 541.6 V550.4 H108.5 Z" fill="url(#bg)"/><rect x="76.1" y="558.4" width="118.9" height="19.3" fill="#f0f0f0"/><path d="M79.4 568 Q87.2 560.2 95.0 568 Q87.2 575.8 79.4 568 Z" fill="#9a9a9a"/><circle cx="87.2" cy="568" r="2.9" fill="#f0f0f0"/><circle cx="87.2" cy="568" r="1.9" fill="#9a9a9a"/><rect x="104.8" y="560.4" width="15" height="15" rx="4" fill="#fdfdfd" stroke="#3a404a" stroke-width="1.2"/><path d="M108.5 565.6 Q112.5 564.6 117.0 565.6 V574.4 H108.5 Z" fill="url(#bg)"/><rect x="76.1" y="582.4" width="118.9" height="19.3" fill="#f0f0f0"/><path d="M79.4 592 Q87.2 584.2 95.0 592 Q87.2 599.8 79.4 592 Z" fill="#9a9a9a"/><circle cx="87.2" cy="592" r="2.9" fill="#f0f0f0"/><circle cx="87.2" cy="592" r="1.9" fill="#9a9a9a"/><rect x="104.8" y="584.4" width="15" height="15" rx="4" fill="#fdfdfd" stroke="#3a404a" stroke-width="1.2"/><path d="M108.5 589.6 Q112.5 588.6 117.0 589.6 V598.4 H108.5 Z" fill="url(#bg)"/><rect x="76.1" y="606.4" width="118.9" height="19.3" fill="#f0f0f0"/><path d="M79.4 616 Q87.2 608.2 95.0 616 Q87.2 623.8 79.4 616 Z" fill="#9a9a9a"/><circle cx="87.2" cy="616" r="2.9" fill="#f0f0f0"/><circle cx="87.2" cy="616" r="1.9" fill="#9a9a9a"/><rect x="104.8" y="608.4" width="15" height="15" rx="4" fill="#fdfdfd" stroke="#3a404a" stroke-width="1.2"/><path d="M108.5 613.6 Q112.5 612.6 117.0 613.6 V622.4 H108.5 Z" fill="url(#bg)"/><rect x="76.1" y="630.4" width="122.5" height="19.3" fill="#f0f0f0"/><path d="M79.4 640 Q87.2 632.2 95.0 640 Q87.2 647.8 79.4 640 Z" fill="#9a9a9a"/><circle cx="87.2" cy="640" r="2.9" fill="#f0f0f0"/><circle cx="87.2" cy="640" r="1.9" fill="#9a9a9a"/><rect x="104.8" y="632.4" width="15" height="15" rx="4" fill="#fdfdfd" stroke="#3a404a" stroke-width="1.2"/><path d="M108.5 637.6 Q112.5 636.6 117.0 637.6 V646.4 H108.5 Z" fill="url(#bg)"/><rect x="76.1" y="654.4" width="118.9" height="19.3" fill="#f0f0f0"/><path d="M79.4 664 Q87.2 656.2 95.0 664 Q87.2 671.8 79.4 664 Z" fill="#9a9a9a"/><circle cx="87.2" cy="664" r="2.9" fill="#f0f0f0"/><circle cx="87.2" cy="664" r="1.9" fill="#9a9a9a"/><rect x="104.8" y="656.4" width="15" height="15" rx="4" fill="#fdfdfd" stroke="#3a404a" stroke-width="1.2"/><path d="M108.5 661.6 Q112.5 660.6 117.0 661.6 V670.4 H108.5 Z" fill="url(#bg)"/><rect x="76.1" y="678.4" width="154.9" height="19.3" fill="#f0f0f0"/><path d="M79.4 688 Q87.2 680.2 95.0 688 Q87.2 695.8 79.4 688 Z" fill="#9a9a9a"/><circle cx="87.2" cy="688" r="2.9" fill="#f0f0f0"/><circle cx="87.2" cy="688" r="1.9" fill="#9a9a9a"/><rect x="104.8" y="680.4" width="15" height="15" rx="4" fill="#fdfdfd" stroke="#3a404a" stroke-width="1.2"/><path d="M108.5 685.6 Q112.5 684.6 117.0 685.6 V694.4 H108.5 Z" fill="url(#bg)"/><rect x="58" y="702.4" width="110.5" height="19.3" fill="#f0f0f0"/><path d="M40.5 706.5 L49.0 712 L40.5 717.5 Z" fill="#fff" stroke="#222" stroke-width="1.3" stroke-linejoin="round"/><path d="M61.400000000000006 712 Q69.2 704.2 77.0 712 Q69.2 719.8 61.400000000000006 712 Z" fill="#9a9a9a"/><circle cx="69.2" cy="712" r="2.9" fill="#f0f0f0"/><circle cx="69.2" cy="712" r="1.9" fill="#9a9a9a"/><path d="M85.5 706.5 H91.5 L93.0 708 H102.0 V717.5 H85.5 Z" fill="#8e8e8e"/><rect x="85.5" y="709" width="16.5" height="1" fill="#b5b5b5"/><rect x="58" y="726.4" width="98.6" height="19.3" fill="#f0f0f0"/><path d="M40.5 730.5 L49.0 736 L40.5 741.5 Z" fill="#fff" stroke="#222" stroke-width="1.3" stroke-linejoin="round"/><path d="M61.400000000000006 736 Q69.2 728.2 77.0 736 Q69.2 743.8 61.400000000000006 736 Z" fill="#9a9a9a"/><circle cx="69.2" cy="736" r="2.9" fill="#f0f0f0"/><circle cx="69.2" cy="736" r="1.9" fill="#9a9a9a"/><path d="M85.5 730.5 H91.5 L93.0 732 H102.0 V741.5 H85.5 Z" fill="#8e8e8e"/><rect x="85.5" y="733" width="16.5" height="1" fill="#b5b5b5"/><rect x="58" y="750.4" width="85.5" height="19.3" fill="#f0f0f0"/><path d="M60.5 755 L63.0 752.5 H72.5 L70.0 755 Z" fill="#8bcaf8"/><rect x="60.5" y="755" width="9.5" height="10" fill="#5fa8e0"/><path d="M70.0 755 L72.5 752.5 V762.5 L70.0 765 Z" fill="#3f8bc8"/><path d="M60.5 765.5 H70.0 L72.5 763 V764.5 L70.0 767 H60.5 Z" fill="#b0b0b0"/><path d="M75.0 765 V754" stroke="#222" stroke-width="1.1"/><path d="M73.3 755 L75.0 752 L76.7 755 Z" fill="#222"/><rect x="58" y="774.4" width="85.5" height="19.3" fill="#f0f0f0"/><path d="M60.5 779 L63.0 776.5 H72.5 L70.0 779 Z" fill="#8bcaf8"/><rect x="60.5" y="779" width="9.5" height="10" fill="#5fa8e0"/><path d="M70.0 779 L72.5 776.5 V786.5 L70.0 789 Z" fill="#3f8bc8"/><path d="M60.5 789.5 H70.0 L72.5 787 V788.5 L70.0 791 H60.5 Z" fill="#b0b0b0"/><path d="M75.0 789 V778" stroke="#222" stroke-width="1.1"/><path d="M73.3 779 L75.0 776 L76.7 779 Z" fill="#222"/><rect x="58" y="798.4" width="85.5" height="19.3" fill="#f0f0f0"/><path d="M60.5 803 L63.0 800.5 H72.5 L70.0 803 Z" fill="#8bcaf8"/><rect x="60.5" y="803" width="9.5" height="10" fill="#5fa8e0"/><path d="M70.0 803 L72.5 800.5 V810.5 L70.0 813 Z" fill="#3f8bc8"/><path d="M60.5 813.5 H70.0 L72.5 811 V812.5 L70.0 815 H60.5 Z" fill="#b0b0b0"/><path d="M75.0 813 V802" stroke="#222" stroke-width="1.1"/><path d="M73.3 803 L75.0 800 L76.7 803 Z" fill="#222"/><rect x="58" y="822.4" width="85.5" height="19.3" fill="#f0f0f0"/><path d="M60.5 827 L63.0 824.5 H72.5 L70.0 827 Z" fill="#8bcaf8"/><rect x="60.5" y="827" width="9.5" height="10" fill="#5fa8e0"/><path d="M70.0 827 L72.5 824.5 V834.5 L70.0 837 Z" fill="#3f8bc8"/><path d="M60.5 837.5 H70.0 L72.5 835 V836.5 L70.0 839 H60.5 Z" fill="#b0b0b0"/><path d="M75.0 837 V826" stroke="#222" stroke-width="1.1"/><path d="M73.3 827 L75.0 824 L76.7 827 Z" fill="#222"/><rect x="58" y="846.4" width="69.6" height="19.3" fill="#f0f0f0"/><path d="M61.0 862.5 V855 L65.5 849.5 H67.5" fill="none" stroke="#555" stroke-width="1.1"/><path d="M61.5 862 V855 L65.5 850 L69.5 862 Z" fill="#eee"/><path d="M66.5 850 L71.5 848.5 L75.5 859 L70.5 860.5 Z" fill="#5fa8e0"/><path d="M73.5 848.5 L76.0 853" stroke="#333" stroke-width="0.9"/><rect x="58" y="870.4" width="85.5" height="19.3" fill="#f0f0f0"/><path d="M60.5 875 L63.0 872.5 H72.5 L70.0 875 Z" fill="#8bcaf8"/><rect x="60.5" y="875" width="9.5" height="10" fill="#5fa8e0"/><path d="M70.0 875 L72.5 872.5 V882.5 L70.0 885 Z" fill="#3f8bc8"/><path d="M60.5 885.5 H70.0 L72.5 883 V884.5 L70.0 887 H60.5 Z" fill="#b0b0b0"/><path d="M75.0 885 V874" stroke="#222" stroke-width="1.1"/><path d="M73.3 875 L75.0 872 L76.7 875 Z" fill="#222"/><rect x="58" y="894.4" width="77.0" height="19.3" fill="#f0f0f0"/><path d="M61.0 910.5 V903 L65.5 897.5 H67.5" fill="none" stroke="#555" stroke-width="1.1"/><path d="M61.5 910 V903 L65.5 898 L69.5 910 Z" fill="#eee"/><path d="M66.5 898 L71.5 896.5 L75.5 907 L70.5 908.5 Z" fill="#5fa8e0"/><path d="M73.5 896.5 L76.0 901" stroke="#333" stroke-width="0.9"/><rect x="58" y="918.4" width="90.0" height="19.3" fill="#f0f0f0"/><path d="M60.5 923 L63.0 920.5 H72.5 L70.0 923 Z" fill="#8bcaf8"/><rect x="60.5" y="923" width="9.5" height="10" fill="#5fa8e0"/><path d="M70.0 923 L72.5 920.5 V930.5 L70.0 933 Z" fill="#3f8bc8"/><path d="M60.5 933.5 H70.0 L72.5 931 V932.5 L70.0 935 H60.5 Z" fill="#b0b0b0"/><path d="M75.0 933 V922" stroke="#222" stroke-width="1.1"/><path d="M73.3 923 L75.0 920 L76.7 923 Z" fill="#222"/><rect x="58" y="942.4" width="77.0" height="19.3" fill="#f0f0f0"/><path d="M61.0 958.5 V951 L65.5 945.5 H67.5" fill="none" stroke="#555" stroke-width="1.1"/><path d="M61.5 958 V951 L65.5 946 L69.5 958 Z" fill="#eee"/><path d="M66.5 946 L71.5 944.5 L75.5 955 L70.5 956.5 Z" fill="#5fa8e0"/><path d="M73.5 944.5 L76.0 949" stroke="#333" stroke-width="0.9"/><rect x="58" y="966.4" width="93.8" height="19.3" fill="#f0f0f0"/><path d="M60.5 971 L63.0 968.5 H72.5 L70.0 971 Z" fill="#8bcaf8"/><rect x="60.5" y="971" width="9.5" height="10" fill="#5fa8e0"/><path d="M70.0 971 L72.5 968.5 V978.5 L70.0 981 Z" fill="#3f8bc8"/><path d="M60.5 981.5 H70.0 L72.5 979 V980.5 L70.0 983 H60.5 Z" fill="#b0b0b0"/><path d="M75.0 981 V970" stroke="#222" stroke-width="1.1"/><path d="M73.3 971 L75.0 968 L76.7 971 Z" fill="#222"/></svg>
<div class="abs t fit" style="--w:123;left:98.3px;top:179.2px;font-size:11px;line-height:11px;color:#fff;font-weight:bold;">CZ-620H_1_25_open v3</div>
<div class="abs t fit" style="--w:77.5;left:90.8px;top:204.0px;font-size:11px;line-height:11px;color:#262626;font-weight:normal;">ドキュメントの設定</div>
<div class="abs t fit" style="--w:81.8;left:91.3px;top:228.0px;font-size:11px;line-height:11px;color:#262626;font-weight:normal;">名前の付いたビュー</div>
<div class="abs t fit" style="--w:21.4;left:116.2px;top:252.0px;font-size:11px;line-height:11px;color:#262626;font-weight:normal;">原点</div>
<div class="abs t fit" style="--w:24;left:116.2px;top:276.0px;font-size:11px;line-height:11px;color:#262626;font-weight:normal;">ボディ</div>
<div class="abs t fit" style="--w:76.2;left:133.8px;top:300.0px;font-size:11px;line-height:11px;color:#262626;font-weight:normal;">フロントパネル・下</div>
<div class="abs t fit" style="--w:76.2;left:133.8px;top:324.0px;font-size:11px;line-height:11px;color:#262626;font-weight:normal;">フロントパネル・上</div>
<div class="abs t fit" style="--w:31.3;left:133.8px;top:348.0px;font-size:11px;line-height:11px;color:#262626;font-weight:normal;">スイッチ</div>
<div class="abs t fit" style="--w:31.3;left:133.8px;top:372.0px;font-size:11px;line-height:11px;color:#262626;font-weight:normal;">LED・2</div>
<div class="abs t fit" style="--w:31.3;left:133.8px;top:396.0px;font-size:11px;line-height:11px;color:#262626;font-weight:normal;">LED・1</div>
<div class="abs t fit" style="--w:22.1;left:133.8px;top:420.0px;font-size:11px;line-height:11px;color:#262626;font-weight:normal;">足・4</div>
<div class="abs t fit" style="--w:22.1;left:133.8px;top:444.0px;font-size:11px;line-height:11px;color:#262626;font-weight:normal;">足・3</div>
<div class="abs t fit" style="--w:22.1;left:133.8px;top:468.0px;font-size:11px;line-height:11px;color:#262626;font-weight:normal;">足・2</div>
<div class="abs t fit" style="--w:21;left:133.8px;top:492.0px;font-size:11px;line-height:11px;color:#262626;font-weight:normal;">足・1</div>
<div class="abs t fit" style="--w:55;left:133.8px;top:516.0px;font-size:11px;line-height:11px;color:#262626;font-weight:normal;">スイッチカバー</div>
<div class="abs t fit" style="--w:51.5;left:133.8px;top:540.0px;font-size:11px;line-height:11px;color:#262626;font-weight:normal;">ボディ・前面</div>
<div class="abs t fit" style="--w:51.5;left:133.8px;top:564.0px;font-size:11px;line-height:11px;color:#262626;font-weight:normal;">ボディ・背面</div>
<div class="abs t fit" style="--w:51.5;left:133.8px;top:588.0px;font-size:11px;line-height:11px;color:#262626;font-weight:normal;">ボディ・右面</div>
<div class="abs t fit" style="--w:51.5;left:133.8px;top:612.0px;font-size:11px;line-height:11px;color:#262626;font-weight:normal;">ボディ・上面</div>
<div class="abs t fit" style="--w:51.5;left:133.8px;top:636.0px;font-size:11px;line-height:11px;color:#262626;font-weight:normal;">ボディ・底面</div>
<div class="abs t fit" style="--w:51.5;left:133.8px;top:660.0px;font-size:11px;line-height:11px;color:#262626;font-weight:normal;">ボディ・左面</div>
<div class="abs t fit" style="--w:84;left:133.8px;top:684.0px;font-size:11px;line-height:11px;color:#262626;font-weight:normal;">ボディ・前面スイッチ</div>
<div class="abs t fit" style="--w:41.3;left:116px;top:708.0px;font-size:11px;line-height:11px;color:#262626;font-weight:normal;">キャンバス</div>
<div class="abs t fit" style="--w:31.2;left:116px;top:732.0px;font-size:11px;line-height:11px;color:#262626;font-weight:normal;">スケッチ</div>
<div class="abs t fit" style="--w:42.8;left:91.6px;top:756.0px;font-size:11px;line-height:11px;color:#262626;font-weight:normal;">押し出し1</div>
<div class="abs t fit" style="--w:42.8;left:91.6px;top:780.0px;font-size:11px;line-height:11px;color:#262626;font-weight:normal;">押し出し2</div>
<div class="abs t fit" style="--w:42.8;left:91.6px;top:804.0px;font-size:11px;line-height:11px;color:#262626;font-weight:normal;">押し出し3</div>
<div class="abs t fit" style="--w:42.8;left:91.6px;top:828.0px;font-size:11px;line-height:11px;color:#262626;font-weight:normal;">押し出し7</div>
<div class="abs t fit" style="--w:27.4;left:91.6px;top:852.0px;font-size:11px;line-height:11px;color:#262626;font-weight:normal;">勾配8</div>
<div class="abs t fit" style="--w:42.8;left:91.6px;top:876.0px;font-size:11px;line-height:11px;color:#262626;font-weight:normal;">押し出し9</div>
<div class="abs t fit" style="--w:33;left:91.6px;top:900.0px;font-size:11px;line-height:11px;color:#262626;font-weight:normal;">勾配10</div>
<div class="abs t fit" style="--w:47.4;left:91.6px;top:924.0px;font-size:11px;line-height:11px;color:#262626;font-weight:normal;">押し出し11</div>
<div class="abs t fit" style="--w:33;left:91.6px;top:948.0px;font-size:11px;line-height:11px;color:#262626;font-weight:normal;">勾配12</div>
<div class="abs t fit" style="--w:49.4;left:91.6px;top:972.0px;font-size:11px;line-height:11px;color:#262626;font-weight:normal;">押し出し13</div>
<div class="abs" style="left:4px;top:1011px;width:300px;height:25px;background:#f0f0f0;border:1px solid #c9c9c9"></div>
<div class="abs t fit" style="--w:31.5;left:28.8px;top:1018.2px;font-size:11px;line-height:11px;color:#555;font-weight:normal;">コメント</div>
<svg class="abs" style="left:280px;top:1016px" width="16" height="16" viewBox="0 0 16 16"><circle cx="7.7" cy="7.5" r="5.2" fill="#222"/><path d="M4.7 7.5 H10.7 M7.7 4.5 V10.5" stroke="#fff" stroke-width="1.5"/></svg><div class="abs" style="left:842px;top:1010px;width:237px;height:24px;background:#efefef"></div>
<svg class="abs" style="left:836px;top:1004px" width="250" height="36" viewBox="836 1004 250 36">
<g fill="#333">
<path d="M866 1019.6 H872 L869 1024.1 Z"/><path d="M977 1019.6 H983.2 L980.1 1024.1 Z"/><path d="M1007.4 1019.6 H1013 L1010.2 1024.1 Z"/>
<path d="M1038.3 1019.6 H1044.1 L1041.2 1024.1 Z"/><path d="M1068.8 1019.6 H1074.9 L1071.8 1024.1 Z"/>
</g>
<!-- orbit -->
<path d="M853.4 1016.5 V1029.5" stroke="#333" stroke-width="2.6"/><path d="M853.4 1016.5 V1029.5" stroke="#fff" stroke-width="1"/>
<path d="M850.8 1017.5 L853.4 1014.3 L856 1017.5 Z" fill="#333"/>
<path d="M849 1021 Q845 1022 845 1023.5 Q845 1026 853 1026 Q860.5 1026 860.5 1023.5 Q860.5 1022 857 1021" fill="none" stroke="#333" stroke-width="1.1"/>
<path d="M848.5 1024.3 L846 1026 L848.8 1027.8 Z" fill="#333"/>
<!-- look at -->
<path d="M878.5 1029.5 V1019 H893.5 V1029.5 Z" fill="#fff" stroke="#444" stroke-width="1.2"/>
<rect x="881.5" y="1021.5" width="9" height="4" fill="#a9b6c6" stroke="#444" stroke-width="0.8"/>
<path d="M880 1019 L882.5 1014.5 L887 1017.5 L891.5 1014.8 L892 1019" fill="#777" stroke="#444" stroke-width="0.8"/>
<!-- hand -->
<path d="M907.5 1025 L904.5 1021.5 Q904 1020 905.5 1020.3 L908.5 1022.5 V1016 Q908.5 1014.8 909.6 1014.8 Q910.7 1014.8 910.7 1016 V1021 V1015 Q910.7 1013.8 911.8 1013.8 Q912.9 1013.8 912.9 1015 V1021 V1015.3 Q912.9 1014.2 914 1014.2 Q915.1 1014.2 915.1 1015.3 V1021 V1016.6 Q915.1 1015.5 916.2 1015.5 Q917.3 1015.5 917.3 1016.6 V1024 Q917.3 1029.8 912.5 1029.8 Q909.5 1029.8 907.5 1025 Z" fill="#fff" stroke="#444" stroke-width="0.9"/>
<!-- zoom -->
<circle cx="935.8" cy="1021.6" r="5" fill="#dfe9ee" stroke="#444" stroke-width="1.2"/>
<path d="M939.5 1025.3 L943 1028.8" stroke="#444" stroke-width="2.4" stroke-linecap="round"/>
<path d="M943.5 1015 H947.5 M945.5 1013 V1017 M943.5 1019.5 H947.5" stroke="#333" stroke-width="0.9"/>
<!-- fit -->
<rect x="956.5" y="1014.5" width="15" height="15" fill="none" stroke="#555" stroke-width="0.9" stroke-dasharray="1.6 1.2"/>
<circle cx="963" cy="1021" r="5.6" fill="#dfe9ee" stroke="#444" stroke-width="1.2"/>
<path d="M967.2 1025.2 L971 1029" stroke="#444" stroke-width="2.4" stroke-linecap="round"/>
<!-- display -->
<rect x="989.5" y="1014.5" width="15" height="11" rx="1" fill="#8fb1dc" stroke="#444" stroke-width="1.2"/>
<path d="M995 1027.5 H999 M993.5 1029.5 H1000.5" stroke="#444" stroke-width="1.2"/>
<!-- grid -->
<rect x="1020.5" y="1014.5" width="15" height="15" fill="#e2e2e2" stroke="#444" stroke-width="1.1"/>
<path d="M1023.5 1014.5 V1029.5 M1026.5 1014.5 V1029.5 M1029.5 1014.5 V1029.5 M1032.5 1014.5 V1029.5 M1020.5 1017.5 H1035.5 M1020.5 1020.5 H1035.5 M1020.5 1023.5 H1035.5 M1020.5 1026.5 H1035.5" stroke="#666" stroke-width="0.7"/>
<!-- viewports -->
<rect x="1051.5" y="1015.5" width="14" height="13" fill="#a7bfe0" stroke="#3a5a9a" stroke-width="1.2"/>
<path d="M1058.5 1015.5 V1028.5 M1051.5 1022 H1065.5" stroke="#3a5a9a" stroke-width="1.2"/>
</svg>
<svg class="abs" style="left:1800px;top:140px" width="120" height="120" viewBox="1800 140 120 120">
<defs><filter id="vcb" x="-50%" y="-50%" width="200%" height="200%"><feGaussianBlur stdDeviation="5"/></filter></defs>
<ellipse cx="1858" cy="238" rx="30" ry="12" fill="#000" opacity="0.12" filter="url(#vcb)"/>
<path d="M1859.5 165.2 L1892.2 187.5 L1853.2 209.8 L1821.2 183.5 Z" fill="#efefef" fill-opacity="0.9"/>
<path d="M1821.2 183.5 L1853.2 209.8 L1853.8 244.2 L1825.2 217.3 Z" fill="#e6e6e6" fill-opacity="0.9"/>
<path d="M1853.2 209.8 L1892.2 187.5 L1887.6 220.7 L1853.8 244.2 Z" fill="#e9e9e9" fill-opacity="0.9"/>
<g stroke="#777" stroke-width="0.8" stroke-dasharray="2.5 1.8" fill="none">
<path d="M1859.5 165.2 L1892.2 187.5 L1853.2 209.8 L1821.2 183.5 Z"/>
<path d="M1821.2 183.5 L1825.2 217.3 L1853.8 244.2 L1887.6 220.7 L1892.2 187.5"/>
<path d="M1853.2 209.8 L1853.8 244.2"/>
</g>
<path d="M1859.5 165 V156" stroke="#5ee05e" stroke-width="1.2"/>
<path d="M1856 147.5 L1859.5 152 L1863 147.5 M1859.5 152 V156" stroke="#5ee05e" stroke-width="1.1" fill="none"/>
<path d="M1825 217.5 L1820.6 220.7" stroke="#6a6aff" stroke-width="1.3"/>
<path d="M1811.5 219.5 H1817.5 L1811.5 228.5 H1817.5" stroke="#6a6aff" stroke-width="1.2" fill="none"/>
<path d="M1887.8 220.8 L1893.3 225.3" stroke="#ff8a8a" stroke-width="1.3"/>
<path d="M1895.5 224.5 L1901 233.5 M1901 224.5 L1895.5 233.5" stroke="#ff8a8a" stroke-width="1.2" fill="none"/>
<g fill="none" stroke="#999" stroke-width="1.15" stroke-linecap="round">
<g transform="matrix(3.200 2.630 -3.830 1.830 1859.5 165.2)"><path transform="translate(1.2 1.0) scale(0.76)" vector-effect="non-scaling-stroke" d="M4.6 2 V8.3 M4.6 5.2 H7.6 M2 8.3 H8.2"/></g>
<g transform="matrix(3.200 2.630 0.400 3.380 1821.2 183.5)"><path transform="translate(0.9 0.5) scale(0.78)" vector-effect="non-scaling-stroke" d="M3.4 1.8 L3.9 2.6 M6.6 1.8 L6.1 2.6 M2 3.3 H8 M2.6 4.3 V8.4 M2.6 4.3 H5 V8.4 M2.6 5.6 H5 M2.6 6.9 H5 M6.3 4.5 V7.6 M7.6 4.1 V8.6 L7 8.3"/></g>
<g transform="matrix(3.900 -2.230 0.060 3.440 1853.2 209.8)"><path transform="translate(1.3 0.8) scale(0.76)" vector-effect="non-scaling-stroke" d="M2.2 3.6 H8 M5.2 1.8 Q4.2 5.6 2.4 8.2 M3.9 5.3 H7.4 V8.2 H3.9 Z"/></g>
</g>
</svg>
<div class="abs" style="left:489.8px;top:1040px;width:48px;height:8px;background:#333"></div>
<svg class="abs" style="left:1870px;top:1044px" width="30" height="4" viewBox="1870 1044 30 4"><path d="M1875.5 1048 V1046.3 H1879 M1881.5 1048 V1046.5 M1884.5 1048 V1046.3 H1887.5 V1048 M1889.5 1046.3 H1894 V1048" stroke="#fff" stroke-width="1.2" fill="none"/></svg>
<div class="abs" style="left:1920px;top:34px;width:8px;height:1014px;background:#fff"></div>

</div>
<script>
document.querySelectorAll('.fit').forEach(function(e){var w=parseFloat(getComputedStyle(e).getPropertyValue('--w'));var r=e.getBoundingClientRect().width;if(r>0&&w>0){e.style.transformOrigin='0 0';e.style.transform='scaleX('+(w/r)+')';}});
</script>
</body></html>
